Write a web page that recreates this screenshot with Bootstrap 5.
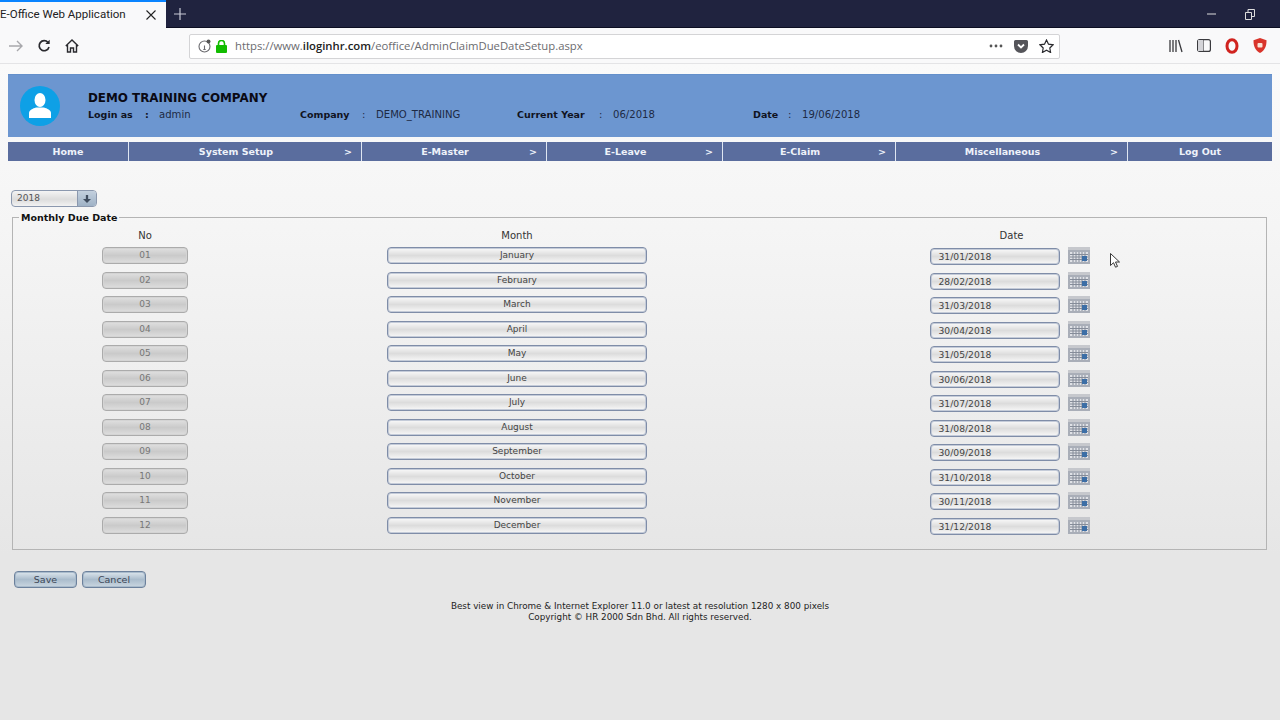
<!DOCTYPE html>
<html lang="en">
<head>
<meta charset="UTF-8" />
<title>E-Office Web Application</title>
<link href="https://cdn.jsdelivr.net/npm/bootstrap@5.3.3/dist/css/bootstrap.min.css" rel="stylesheet" />
<style>
    html, body { height: 100%; }
    body {
        width: 1280px; height: 720px; overflow: hidden;
        background: #e6e6e6;
        font-family: "DejaVu Sans", Verdana, sans-serif;
        font-size: 9.5px; color: #333;
    }
    .tabstrip { height: 28px; background: #20233f; border-bottom: 1px solid #0c0e22; }
    .active-tab {
        width: 166px; height: 28px; background: #f9f9fa; border-top: 2px solid #0a84ff;
        font-family: Roboto, sans-serif; font-size: 11.5px; color: #222; padding-right: 10px;
        white-space: nowrap;
    }
    .new-tab { margin-left: 8px; }
    .win-ctrls { margin-left: auto; gap: 29px; padding-right: 25px; }
    .toolbar { height: 36px; background: #f9f9fa; border-bottom: 1px solid #e4e4e6; }
    .nav-icons { width: 189px; padding-left: 9px; gap: 14px; }
    .urlbar {
        width: 871px; height: 25px; margin-top: 1px; background: #fff; border: 1px solid #d4d4d6; border-radius: 2px;
        font-family: "Open Sans", sans-serif; font-size: 11.3px; color: #6b6b6f; padding: 0 5px 0 8px;
    }
    .urlbar b { font-weight: 600; color: #222; }
    .url-text { margin-left: 8px; }
    .url-tools { margin-left: auto; gap: 7px; }
    .side-tools { gap: 14px; margin-left: 109px; }
    .page { height: 655px; padding: 10px 8px 0; background: linear-gradient(#fafafa, #f5f5f5 25%, #e6e6e6 75%, #e6e6e6); }
    .banner { height: 63px; background: #6c96d0; border-top: 1px solid #6490cb; padding-left: 12px; color: #111; }
    .avatar { width: 40px; height: 40px; border-radius: 50%; background: #0ea0e6; margin-top: 11px; }
    .banner-text { margin-left: 28px; padding-top: 16px; }
    .co-name { font-size: 11.9px; font-weight: 700; line-height: 15px; color: #0a0a14; }
    .info-line { line-height: 14px; margin-top: 2px; font-size: 10.1px; }
    .info-line b { font-size: 9.5px; font-weight: 700; color: #10131f; }
    .info-line span { color: #1d2a44; }
    .info-a { width: 212px; }
    .info-b { width: 217px; }
    .info-c { width: 236px; }
    .lbl-a { width: 57px; }
    .lbl-b { width: 62px; }
    .lbl-c { width: 82px; }
    .lbl-d { width: 35px; }
    .colon { width: 14px; }
    .menu-bar { height: 19px; margin-top: 5px; background: #5a6d9e; color: #eef2fa; font-weight: 700; font-size: 9.5px; }
    .menu-item { border-right: 1px solid #dfe6f2; padding: 0 9px; height: 19px; position: relative; text-align: center; line-height: 19px; }
    .menu-item:last-child { border-right: 0; }
    .has-arrow { padding-right: 27px; }
    .menu-arrow { position: absolute; right: 9px; top: 0; }
    .w-home { width: 121px; }
    .w-sys { width: 233px; }
    .w-master { width: 185px; }
    .w-leave { width: 176px; }
    .w-claim { width: 173px; }
    .w-misc { width: 232px; }
    .w-logout { width: 144px; }
    .year-select {
        width: 86px; height: 17px; margin: 29px 0 0 3px;
        border: 1px solid #8b98ae; border-radius: 4px; overflow: hidden;
        background: linear-gradient(#f4f4f4, #dcdcdc 55%, #f2f2f2);
    }
    .year-val { flex: 1; padding-left: 5px; line-height: 15px; color: #555; font-size: 9px; }
    .year-btn { width: 19px; background: linear-gradient(#c3d0de, #9fb2c6); border-left: 1px solid #8b98ae; }
    .due-box { margin: 4px 5px 0 4px; border: 1px solid #b4b4b4; height: 339px; }
    .due-box legend {
        float: none; width: auto; margin: -7px 0 0 6px; padding: 0 2px;
        font-size: 9.5px; font-weight: 700; line-height: 13px; color: #111;
    }
    .due-head, .due-row { display: grid; grid-template-columns: 264px 480px 1fr; }
    .due-head { height: 18px; margin-top: 5px; line-height: 14px; text-align: center; color: #333; font-size: 10px; }
    .due-row { height: 24.5px; font-size: 9px; }
    .cell-box {
        height: 17px; line-height: 15px; text-align: center; border-radius: 4px;
        background: linear-gradient(#fafafa, #dcdcdc 50%, #f8f8f8);
    }
    .no-box { width: 86px; border: 1px solid #ababab; box-shadow: inset 0 0 0 1px #d4d4d4; background: linear-gradient(#e0e0e0, #cacaca 50%, #dedede); color: #777; }
    .month-box { width: 260px; border: 1px solid #7f8da8; box-shadow: inset 0 0 0 1px #c4cbd8; color: #444; }
    .date-box { width: 130px; border: 1px solid #7f8da8; box-shadow: inset 0 0 0 1px #c4cbd8; color: #444; text-align: left; padding-left: 8px; margin-top: 1px; font-size: 9.2px; }
    .date-wrap { gap: 8px; padding-right: 4px; }
    .form-btns { gap: 5px; margin: 21px 0 0 6px; }
    .act-btn {
        height: 17px; line-height: 15px; text-align: center; border: 1px solid #6c819c; box-shadow: inset 0 0 0 1px #a9bbcc;
        border-radius: 4px; color: #3c4656;
        background: linear-gradient(#dde6ed, #aabccc 50%, #cad6e0);
    }
    .btn-save { width: 63px; }
    .btn-cancel { width: 64px; }
    .footer-note { margin-top: 13px; text-align: center; line-height: 11px; color: #222; font-size: 8.8px; }
</style>
</head>
<body>
    <div class="tabstrip d-flex align-items-start">
        <div class="active-tab d-flex align-items-center justify-content-between">
            <span>E-Office Web Application</span>
            <svg width="10" height="10" viewBox="0 0 10 10"><path d="M.5.5l9 9M9.500.5l-9 9" stroke="#222" stroke-width="1.100"/></svg>
        </div>
        <svg class="new-tab mt-2" width="12" height="12" viewBox="0 0 12 12"><path d="M6 0v12M0 6h12" stroke="#c8cad6" stroke-width="1.200"/></svg>
        <div class="win-ctrls d-flex align-items-center" style="height:28px">
            <svg width="9" height="2" viewBox="0 0 9 2"><path d="M0 1h9" stroke="#ddd"/></svg>
            <svg width="10" height="11" viewBox="0 0 10 11" fill="none" stroke="#ddd"><path d="M.5 3.500h6v7h-6zM3 3.500V.5h6.500v7h-3"/></svg>
        </div>
    </div>

    <div class="toolbar d-flex align-items-center">
        <div class="nav-icons d-flex align-items-center">
            <svg width="14" height="12" viewBox="0 0 14 12" fill="none" stroke="#a8a8ac" stroke-width="1.400"><path d="M0 6h13M8 1l5 5-5 5"/></svg>
            <svg width="14" height="14" viewBox="0 0 14 14" fill="none" stroke="#2a2a2e" stroke-width="1.700"><path d="M12 8a5 5 0 1 1-1-4.500"/><path d="M12.700 0.700v4.400H8.300z" fill="#2a2a2e" stroke="none"/></svg>
            <svg width="14" height="14" viewBox="0 0 14 14" fill="none" stroke="#2a2a2e" stroke-width="1.400"><path d="M.8 7L7 1l6.200 6M2.500 6v7h3V9h3v4h3V6"/></svg>
        </div>
        <div class="urlbar d-flex align-items-center">
            <svg width="14" height="14" viewBox="0 0 14 14" fill="none" stroke="#6b6b6f" stroke-width="1.100"><circle cx="6.500" cy="7.500" r="5.500"/><path d="M6.500 6.500v4M5.300 10.500h2.400"/><circle cx="10.500" cy="2.500" r="2" fill="#555" stroke="none"/></svg>
            <svg class="ms-1" width="11" height="13" viewBox="0 0 11 13"><rect y="5" width="11" height="8" rx="1" fill="#12bc00"/><path d="M2.500 5.500V3.500a3 3 0 0 1 6 0v2" fill="none" stroke="#12bc00" stroke-width="1.600"/></svg>
            <span class="url-text">https://www.<b>iloginhr.com</b>/eoffice/AdminClaimDueDateSetup.aspx</span>
            <div class="url-tools d-flex align-items-center">
                <svg width="14" height="4" viewBox="0 0 14 4" fill="#555"><circle cx="2" cy="2" r="1.400"/><circle cx="7" cy="2" r="1.400"/><circle cx="12" cy="2" r="1.400"/></svg>
                <svg class="ms-1" width="14" height="13" viewBox="0 0 14 13"><path d="M1.500 0h11A1.500 1.500 0 0 1 14 1.500V6a7 7 0 0 1-14 0V1.500A1.500 1.500 0 0 1 1.500 0z" fill="#55555a"/><path d="M4 4.500l3 3 3-3" fill="none" stroke="#fff" stroke-width="1.800"/></svg>
                <svg class="ms-1" width="15" height="14" viewBox="0 0 15 14" fill="none" stroke="#2a2a2e" stroke-width="1.200"><path d="M7.500 1l2 4.200 4.600.6-3.300 3.200.8 4.500-4.100-2.200-4.100 2.200.8-4.500L.9 5.800l4.600-.6z"/></svg>
            </div>
        </div>
        <div class="side-tools d-flex align-items-center">
            <svg width="14" height="14" viewBox="0 0 14 14" fill="none" stroke="#3a3a3e" stroke-width="1.300"><path d="M1 1v12M4 1v12M7 1v12M9.500 1l3.500 12"/></svg>
            <svg width="14" height="13" viewBox="0 0 14 13" fill="none" stroke="#3a3a3e" stroke-width="1.200"><rect x=".6" y=".6" width="12.800" height="11.800" rx="2"/><path d="M6 1v11"/><path d="M1 1h5v11H1z" fill="#d4d4d8" stroke="none"/></svg>
            <svg width="14" height="16" viewBox="0 0 14 16" fill="none" stroke="#d0231f" stroke-width="3"><ellipse cx="7" cy="8" rx="5" ry="6.300"/></svg>
            <svg width="14" height="15" viewBox="0 0 14 15"><path d="M7 0l6.500 2.200c0 6-1.500 10-6.500 12.800C2 12.200.5 8.200.5 2.200z" fill="#d9342b"/><rect x="4.500" y="5" width="5" height="4.500" rx="1" fill="#fbe3d6"/></svg>
        </div>
    </div>

    <div class="page">
        <div class="banner d-flex">
            <div class="avatar d-flex justify-content-center align-items-center flex-shrink-0">
                <svg width="22" height="26" viewBox="0 0 22 26" fill="#fff"><ellipse cx="11" cy="7" rx="5.500" ry="7"/><path d="M0 25v-5c0-3 4-4.500 7-5.500h8c3 1 7 2.500 7 5.500v5z"/></svg>
            </div>
            <div class="banner-text">
                <div class="co-name">DEMO TRAINING COMPANY</div>
                <div class="info-line d-flex">
                    <div class="info-a d-flex"><b class="lbl-a">Login as</b><b class="colon">:</b><span>admin</span></div>
                    <div class="info-b d-flex"><b class="lbl-b">Company</b><span class="colon">:</span><span>DEMO_TRAINING</span></div>
                    <div class="info-c d-flex"><b class="lbl-c">Current Year</b><span class="colon">:</span><span>06/2018</span></div>
                    <div class="d-flex"><b class="lbl-d">Date</b><span class="colon">:</span><span>19/06/2018</span></div>
                </div>
            </div>
        </div>

        <div class="menu-bar d-flex">
            <div class="menu-item w-home">Home</div>
            <div class="menu-item has-arrow w-sys">System Setup<span class="menu-arrow">&gt;</span></div>
            <div class="menu-item has-arrow w-master">E-Master<span class="menu-arrow">&gt;</span></div>
            <div class="menu-item has-arrow w-leave">E-Leave<span class="menu-arrow">&gt;</span></div>
            <div class="menu-item has-arrow w-claim">E-Claim<span class="menu-arrow">&gt;</span></div>
            <div class="menu-item has-arrow w-misc">Miscellaneous<span class="menu-arrow">&gt;</span></div>
            <div class="menu-item w-logout">Log Out</div>
        </div>

        <div class="year-select d-flex">
            <div class="year-val">2018</div>
            <div class="year-btn d-flex justify-content-center align-items-center">
                <svg width="8" height="8" viewBox="0 0 7 7" fill="#3f4c5e"><path d="M2.500 0h2v3.500H7L3.500 7 0 3.500h2.500z"/></svg>
            </div>
        </div>

        <fieldset class="due-box">
            <legend>Monthly Due Date</legend>
            <div class="due-head"><div>No</div><div>Month</div><div>Date</div></div>
            <div id="dueRows"></div>
        </fieldset>

        <div class="form-btns d-flex">
            <div class="act-btn btn-save">Save</div>
            <div class="act-btn btn-cancel">Cancel</div>
        </div>

        <div class="footer-note">
            Best view in Chrome &amp; Internet Explorer 11.0 or latest at resolution 1280 x 800 pixels<br />
            Copyright &copy; HR 2000 Sdn Bhd. All rights reserved.
        </div>
    </div>

    <svg class="position-absolute" style="left:1110px;top:253px" width="10" height="15" viewBox="0 0 10 15"><path d="M.5.5v12l3-2.800 2 4.500 2-.8-2-4.400h4z" fill="#fff" stroke="#222" stroke-width=".9"/></svg>

    <script src="https://cdn.jsdelivr.net/npm/bootstrap@5.3.3/dist/js/bootstrap.bundle.min.js"></script>
    <script>
        const months = ["January", "February", "March", "April", "May", "June", "July", "August", "September", "October", "November", "December"];
        const lastDays = ["31", "28", "31", "30", "31", "30", "31", "31", "30", "31", "30", "31"];
        const calIcon = '<svg width="22" height="17" viewBox="0 0 22 17"><rect width="22" height="17" fill="#a9aeb8"/><rect y="0" width="22" height="3" fill="#c6c8cd"/><rect x="2" y="5" width="18" height="10" fill="#dfe1e6"/><path d="M5 5v10M8 5v10M11 5v10M14 5v10M17 5v10M2 7.500h18M2 10h18M2 12.500h18" stroke="#858c99" stroke-width="1"/><rect x="14" y="9" width="5" height="5" fill="#3c6ea6"/></svg>';
        let html = "";
        months.forEach(function (m, i) {
            const n = String(i + 1).padStart(2, "0");
            html += '<div class="due-row">'
                + '<div class="d-flex justify-content-center"><div class="cell-box no-box">' + n + '</div></div>'
                + '<div class="d-flex justify-content-center"><div class="cell-box month-box">' + m + '</div></div>'
                + '<div class="date-wrap d-flex justify-content-center"><div class="cell-box date-box">' + lastDays[i] + '/' + n + '/2018</div>' + calIcon + '</div>'
                + '</div>';
        });
        document.getElementById("dueRows").innerHTML = html;
    </script>
</body>
</html>
